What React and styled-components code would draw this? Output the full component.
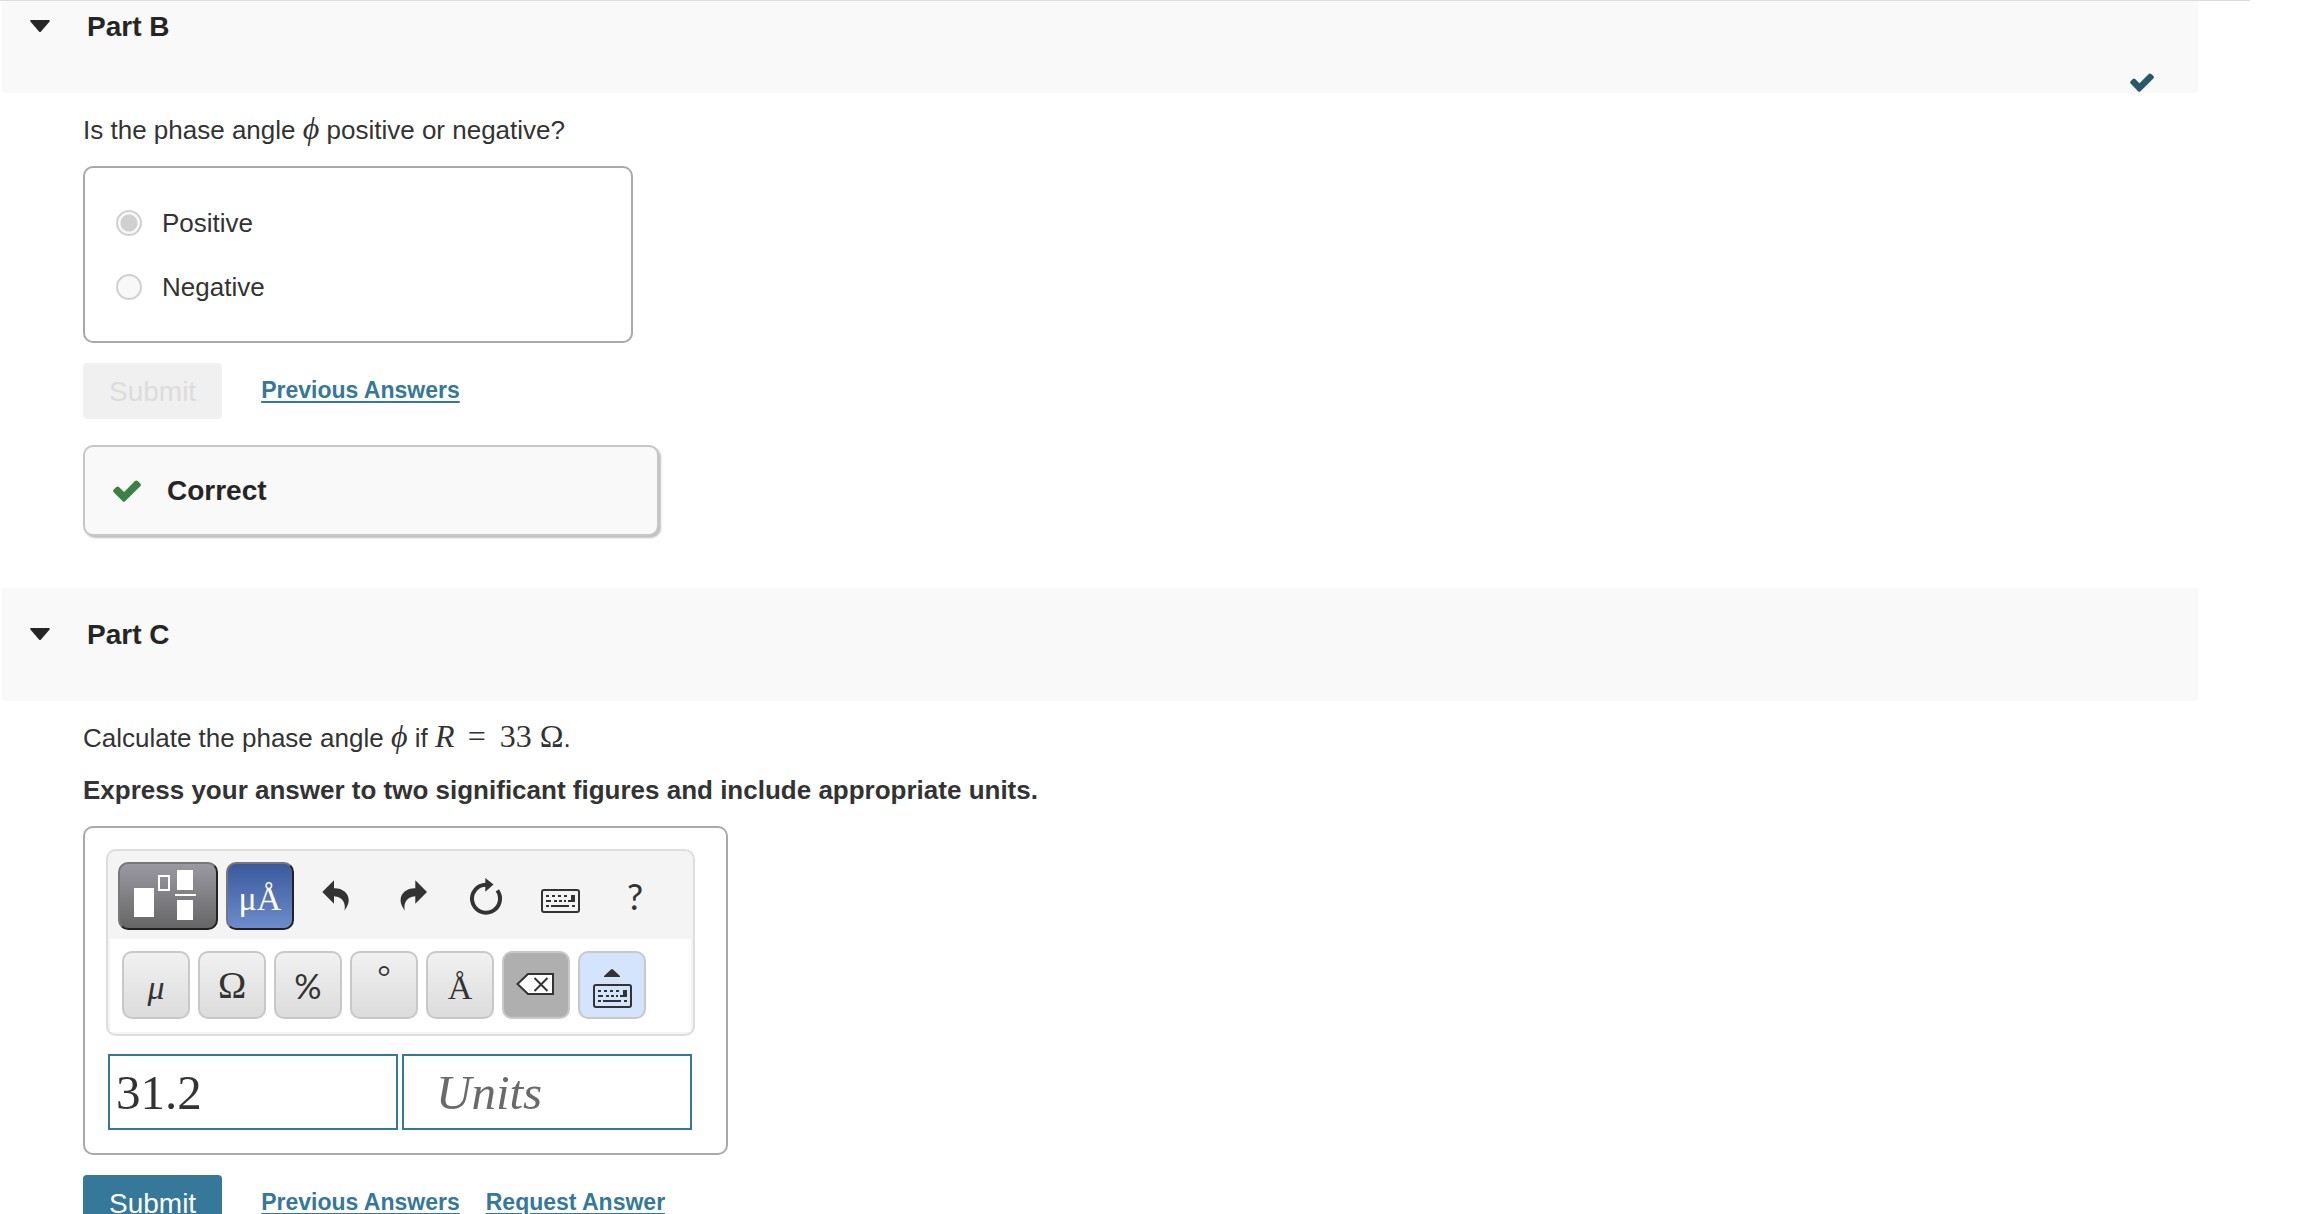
import React from 'react'
import styled, { createGlobalStyle, css } from 'styled-components'

export default function App() {
  return (
    <Page>
      <GlobalStyle />
      <section>
        <PartHeader title="Part B" $scrolled done />
        <PartBody>
          <Text>
            Is the phase angle <MathItalic>ϕ</MathItalic> positive or negative?
          </Text>
          <ChoiceBox>
            <Choice>
              <Radio type="radio" name="phase" defaultChecked disabled />
              Positive
            </Choice>
            <Choice>
              <Radio type="radio" name="phase" disabled />
              Negative
            </Choice>
          </ChoiceBox>
          <Actions>
            <Submit type="button" disabled>
              Submit
            </Submit>
            <ActionLink href="#">Previous Answers</ActionLink>
          </Actions>
          <Feedback>
            <CheckIcon width="28" height="22" color="#3a8142" />
            <FeedbackText>Correct</FeedbackText>
          </Feedback>
        </PartBody>
      </section>
      <section>
        <PartHeader title="Part C" />
        <PartBody>
          <Text>
            Calculate the phase angle <MathItalic>ϕ</MathItalic> if{' '}
            <MathItalic>R</MathItalic>{' '}
            <MathText>
              <Relation>=</Relation> 33 Ω
            </MathText>
            .
          </Text>
          <Instructions>
            Express your answer to two significant figures and include
            appropriate units.
          </Instructions>
          <AnswerBox>
            <MathEditor />
            <Fields>
              <Field type="text" aria-label="Value" defaultValue="31.2" />
              <Field type="text" aria-label="Units" placeholder="Units" $units />
            </Fields>
          </AnswerBox>
          <Actions>
            <Submit type="button">Submit</Submit>
            <ActionLink href="#">Previous Answers</ActionLink>
            <ActionLink href="#">Request Answer</ActionLink>
          </Actions>
        </PartBody>
      </section>
    </Page>
  )
}

const PartHeader = ({ title, done, $scrolled }) => (
  <Header $scrolled={$scrolled}>
    <Toggle type="button" aria-label={`Collapse ${title}`}>
      <svg width="20" height="12" viewBox="0 0 20 12">
        <path d="M1 0h18q1.4.6.4 1.8l-8.4 9.6q-1 1-2 0L.6 1.8Q-.4.6 1 0z" fill="#252525" />
      </svg>
    </Toggle>
    <PartTitle>{title}</PartTitle>
    {done && (
      <Status>
        <CheckIcon width="24" height="19" color="#26596c" />
      </Status>
    )}
  </Header>
)

const MathEditor = () => (
  <Editor>
    <ToolRow>
      <TemplateButton type="button" aria-label="Templates">
        <svg width="96" height="64" viewBox="2 2 96 64" fill="#fff">
          <path d="M16 26h20v29H16zM59 8h16v20H59zM57 32h21v2H57zM59 38h16v20H59z" />
          <path d="M41 14h10v14H41z" fill="none" stroke="#fff" strokeWidth="2" />
        </svg>
      </TemplateButton>
      <UnitsButton type="button" aria-label="Units">
        μÅ
      </UnitsButton>
      <Tools>
        <ToolButton type="button" aria-label="Undo">
          <svg width="66" height="68" viewBox="0 0 66 68" fill="#333">
            <path d="M20.3 30 32 18.3v8C40 26 46.7 31 46.7 38c0 5-2.7 8-4.2 10.7C44 42 41 34.5 32 34.3v7.4z" />
          </svg>
        </ToolButton>
        <ToolButton type="button" aria-label="Redo">
          <svg width="66" height="68" viewBox="0 0 66 68" fill="#333">
            <path d="M50 30 38.3 18.3v8C30.3 26 23.6 31 23.6 38c0 5 2.7 8 4.2 10.7C26.3 42 29.3 34.5 38.3 34.3v7.4z" />
          </svg>
        </ToolButton>
        <ToolButton type="button" aria-label="Reset">
          <svg width="66" height="68" viewBox="0 0 66 68" fill="#333">
            <path d="M45.3 28.4A14 14 0 1 1 34 22.7" fill="none" stroke="#333" strokeWidth="4" />
            <path d="M33.3 16l8.2 6.5-8.2 7.2z" />
          </svg>
        </ToolButton>
        <ToolButton type="button" aria-label="Keyboard shortcuts">
          <svg width="66" height="68" viewBox="0 0 66 68">
            <KeyboardGlyph x={14} y={27} />
          </svg>
        </ToolButton>
        <ToolButton type="button" aria-label="Help">
          ?
        </ToolButton>
      </Tools>
    </ToolRow>
    <Palette>
      <Key type="button" $italic $low>
        μ
      </Key>
      <Key type="button" $large>
        Ω
      </Key>
      <Key type="button" $sans>
        %
      </Key>
      <Key type="button" $raised>
        °
      </Key>
      <Key type="button" $low>
        Å
      </Key>
      <Key type="button" $tone="#afafaf" aria-label="Backspace">
        <svg width="64" height="64" viewBox="2 2 64 64" stroke="#333" strokeWidth="2">
          <path d="M15.5 33 26 23h25v20H26z" fill="#fff" />
          <path d="M32.5 27l13 13M45.5 27l-13 13" />
        </svg>
      </Key>
      <Key type="button" $tone="#d3e4fc" aria-label="Show keyboard">
        <svg width="64" height="64" viewBox="2 2 64 64">
          <path d="M26 26v-1l7-6.5q1-1 2 0l7 6.5v1z" fill="#333" />
          <KeyboardGlyph x={15} y={33} />
        </svg>
      </Key>
    </Palette>
  </Editor>
)

const KeyboardGlyph = ({ x, y }) => (
  <g transform={`translate(${x} ${y})`} fill="#333">
    <rect x="1" y="1" width="37" height="22" rx="2" fill="none" stroke="#333" strokeWidth="2" />
    <path d="M5 6h3v2H5zM11 6h3v2h-3zM17 6h3v2h-3zM23 6h3v2h-3zM30 6h4v7h-7v-2h3z" />
    <path d="M5 11h5v2H5zM13 11h3v2h-3zM18 11h3v2h-3zM23 11h2v2h-2z" />
    <path d="M5 16h3v2H5zM10 16h18v2H10zM31 16h3v2h-3z" />
  </g>
)

const CheckIcon = ({ width, height, color }) => (
  <svg width={width} height={height} viewBox="0 0 24 19" preserveAspectRatio="none">
    <path
      d="M.6 8.3 2.9 6q1.1-.8 2.2 0l4.4 4.3L18.8.9q1.2-1 2.4 0l2.2 2.2q1 1.1 0 2.3L10.3 18.4q-1 .9-2 0L.6 10.5q-.9-1.1 0-2.2z"
      fill={color}
    />
  </svg>
)

const GlobalStyle = createGlobalStyle`
  * {
    box-sizing: border-box;
  }
  body {
    margin: 0;
    background: #fff;
    color: #333;
    font-family: 'Liberation Sans', Arial, sans-serif;
  }
  svg {
    display: block;
    flex: none;
  }
  button {
    font: inherit;
    color: inherit;
    cursor: pointer;
  }
`

const Page = styled.main`
  margin-right: 50px;
  border-top: 1px solid #ddd;
`

const Header = styled.header`
  display: flex;
  align-items: flex-start;
  margin: 0 52px 0 2px;
  padding: ${({ $scrolled }) => ($scrolled ? '10px' : '31px')} 44px 1px 28px;
  min-height: ${({ $scrolled }) => ($scrolled ? '92px' : '113px')};
  background: #f9f9f9;
`

const Toggle = styled.button`
  display: flex;
  align-items: center;
  height: 32px;
  margin-right: 37px;
  padding: 0 0 2px;
  border: 0;
  background: none;
`

const PartTitle = styled.h2`
  margin: 0;
  color: #252525;
  font-size: 28px;
  line-height: 32px;
  font-weight: 700;
`

const Status = styled.div`
  align-self: flex-end;
  margin-left: auto;
`

const PartBody = styled.div`
  padding: 21px 0 52px 83px;
`

const Text = styled.p`
  margin: 0 0 20px;
  font-size: 26px;
  line-height: 32px;
`

const Instructions = styled(Text)`
  font-weight: 700;
`

// zero line-height keeps the larger serif from stretching the text line
const MathText = styled.span`
  font-family: 'Liberation Serif', 'Times New Roman', serif;
  font-size: 32px;
  line-height: 0;
`

const MathItalic = styled(MathText)`
  font-style: italic;
`

const Relation = styled.span`
  margin: 0 6px;
`

const ChoiceBox = styled.div`
  display: flex;
  flex-direction: column;
  gap: 32px;
  width: 550px;
  padding: 39px 31px 38px;
  border: 2px solid #a9a9a9;
  border-radius: 10px;
`

const Choice = styled.label`
  display: flex;
  align-items: center;
  gap: 20px;
  font-size: 26px;
  line-height: 32px;
`

const Radio = styled.input`
  appearance: none;
  width: 26px;
  height: 26px;
  margin: 0;
  border: 2px solid #d0d0d0;
  border-radius: 50%;
  background: #f8f8f8;
  &:checked {
    background: radial-gradient(circle, #d0d0d0 8px, #f8f8f8 9px);
  }
`

const Actions = styled.div`
  display: flex;
  align-items: center;
  margin-top: 20px;
`

const Submit = styled.button`
  height: 56px;
  margin-right: 13px;
  padding: 2px 26px 0;
  border: 0;
  border-radius: 4px;
  background: #357899;
  color: #fff;
  font-size: 28px;
  &:disabled {
    background: #f0f0f0;
    color: #dcdcdc;
  }
`

const ActionLink = styled.a`
  margin-left: 26px;
  padding-bottom: 2px;
  color: #357899;
  font-size: 23px;
  line-height: 28px;
  font-weight: 700;
  text-underline-offset: 3px;
  text-decoration-thickness: 2px;
`

const Feedback = styled.div`
  display: flex;
  align-items: center;
  gap: 26px;
  width: 576px;
  margin-top: 26px;
  padding: 28px 28px 27px;
  border: 2px solid #c6c6c6;
  border-radius: 10px;
  background: #f9f9f9;
  box-shadow: 2px 2px 2px #c0c0c0;
`

const FeedbackText = styled.strong`
  color: #252525;
  font-size: 28px;
  line-height: 32px;
`

const AnswerBox = styled.div`
  width: 645px;
  padding: 21px 31px 23px 21px;
  border: 2px solid #a9a9a9;
  border-radius: 10px;
`

const Editor = styled.div`
  padding-bottom: 2px;
  border: 2px solid #ddd;
  border-radius: 10px;
  background: #f4f4f4;
`

const ToolRow = styled.div`
  display: flex;
  gap: 8px;
  padding: 11px 10px 9px;
`

const raised = css`
  display: flex;
  align-items: center;
  justify-content: center;
  height: 68px;
  padding: 0;
  border: 2px solid;
  border-color: #777 #222 #222 #777;
  border-radius: 10px;
`

const TemplateButton = styled.button`
  ${raised}
  width: 100px;
  background: linear-gradient(#9a99a2, #666);
`

const UnitsButton = styled.button`
  ${raised}
  width: 68px;
  padding-top: 6px;
  background: linear-gradient(#3a5a9c, #6d8ccb);
  color: #fff;
  font-family: 'Liberation Serif', 'Times New Roman', serif;
  font-size: 34px;
`

const Tools = styled.div`
  display: flex;
  gap: 9px;
`

const ToolButton = styled.button`
  display: flex;
  align-items: center;
  justify-content: center;
  width: 66px;
  height: 68px;
  padding: 0;
  border: 0;
  background: none;
  font-family: Lato, sans-serif;
  font-size: 36px;
`

const Palette = styled.div`
  display: flex;
  gap: 8px;
  margin: 0 2px;
  padding: 12px 12px 13px;
  background: #fff;
`

const keyPadding = ({ $low, $raised }) => {
  if ($low) return '6px 0 0'
  if ($raised) return '0 0 16px'
  return '0'
}

const Key = styled.button`
  display: flex;
  align-items: center;
  justify-content: center;
  width: 68px;
  height: 68px;
  padding: ${keyPadding};
  border: 2px solid #c8c8c8;
  border-radius: 10px;
  background: ${({ $tone }) => $tone || 'linear-gradient(#f1f1f1, #dcdcdc)'};
  font-family: ${({ $sans }) =>
    $sans ? 'Lato, sans-serif' : "'Liberation Serif', 'Times New Roman', serif"};
  font-size: ${({ $large }) => ($large ? '38px' : '34px')};
  font-style: ${({ $italic }) => ($italic ? 'italic' : 'normal')};
`

const Fields = styled.div`
  display: grid;
  grid-template-columns: 1fr 1fr;
  gap: 4px;
  margin: 18px 3px 0 2px;
`

const Field = styled.input`
  min-width: 0;
  height: 76px;
  padding: 0 ${({ $units }) => ($units ? '32px' : '6px')};
  border: 2px solid #357899;
  background: #fff;
  color: #333;
  font-family: 'Liberation Serif', 'Times New Roman', serif;
  font-size: 49px;
  &::placeholder {
    color: #6a6a6a;
    font-style: italic;
    opacity: 1;
  }
`
